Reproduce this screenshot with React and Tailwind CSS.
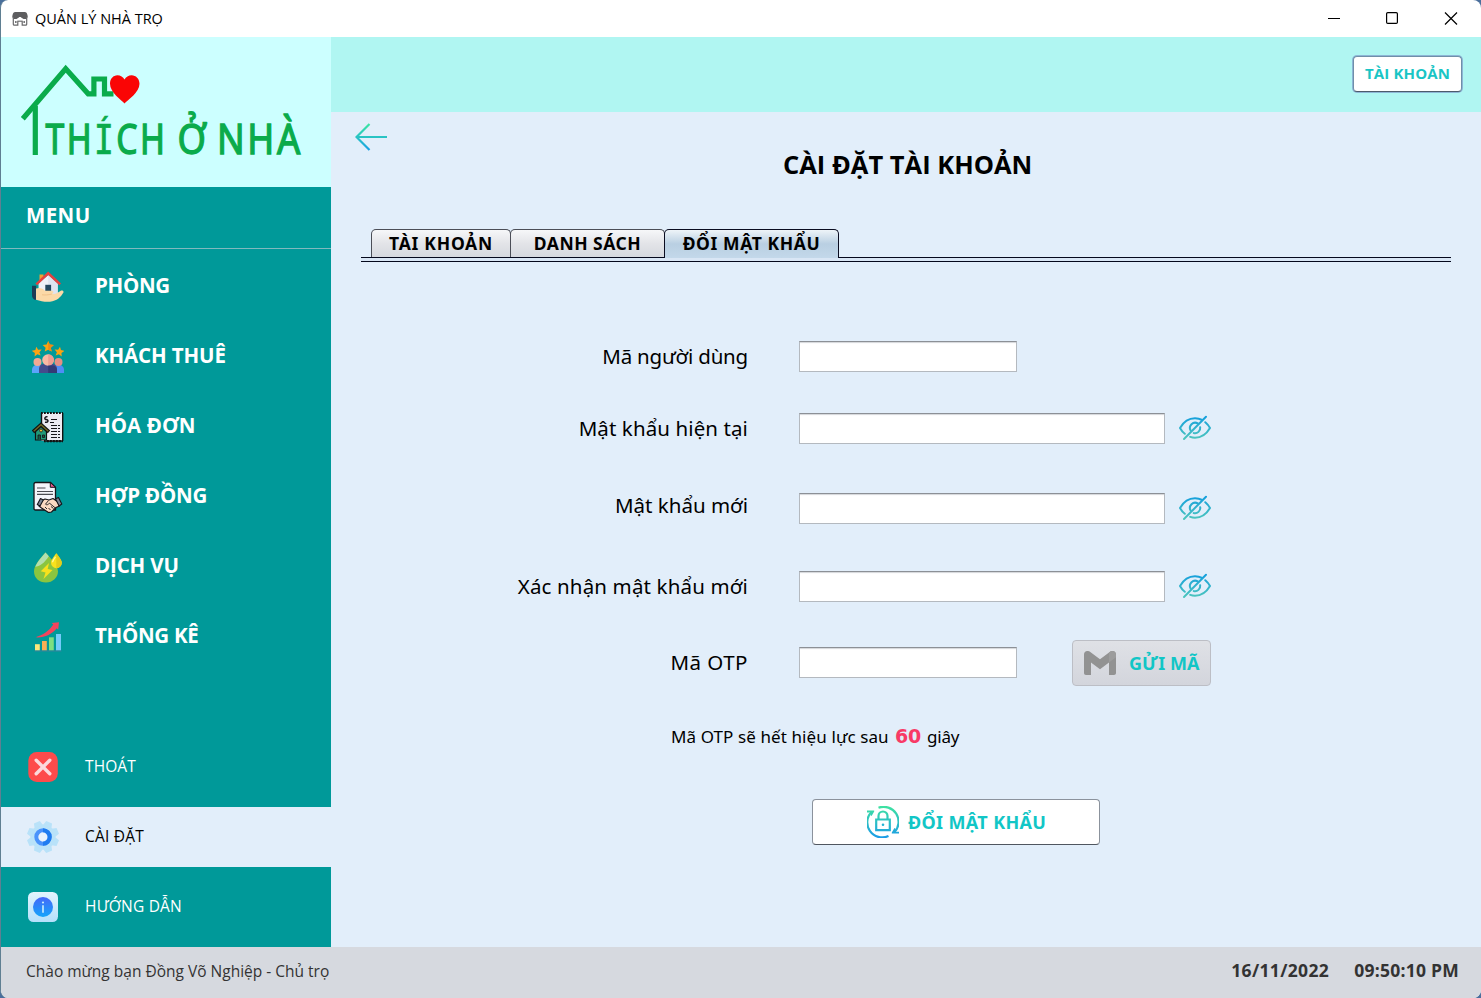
const SANS = "font-['Open_Sans','Noto_Sans',sans-serif]";
const TAHOMA = "font-['Noto_Sans','DejaVu_Sans',sans-serif]";

function AppIcon() {
  return (
    <svg width="16" height="16" viewBox="0 0 16 16">
      <path d="M3 .9h10c1.800 0 2.800 3 2.800 5.700H.2C.2 3.900 1.200.9 3 .9z" fill="#5e5e60" />
      <path d="M1.300 6v7.200c0 .7.500 1 1 1h3.500v-4h4.400v4h3.500c.6 0 1-.4 1-1V6" fill="#fff" stroke="#68686a" strokeWidth="1.200" />
      <path d="M1.500 6h13v2h-3L8 5.800 4.500 8h-3z" fill="#5e5e60" />
      <path d="M4.800 9.200L8 6.500l3.200 2.700" fill="#fff" stroke="#fff" strokeWidth="1" />
      <path d="M3 10h1.600v2H3zM11.400 10H13v2h-1.600z" fill="#77777a" />
    </svg>
  );
}

function Logo() {
  return (
    <svg width="330" height="150" viewBox="1 37 330 150">
      <g fill="none" stroke="#0aab4b" strokeWidth="5.200">
        <path d="M22.800 118.800L65.700 68.700l22.500 25.100h5.700V79h10.600v14.800h9" />
        <path d="M35.300 106v49" />
      </g>
      <path d="M124.500 103.500c-3-3.500-14.500-11-14.500-19.800 0-5 3.300-8.500 7.400-8.500 3.100 0 5.700 1.800 7.100 4.300 1.400-2.500 4-4.300 7.200-4.300 4.100 0 7.800 3.500 7.800 8.500 0 8.800-12 16.300-15 19.800z" fill="#fa0505" />
      <g fill="#0aab4b" stroke="#0aab4b" strokeWidth="1.300" fontSize="41" style={{ fontFamily: "'Noto Sans', sans-serif" }}>
        <text x="45.500" y="154" textLength="122" lengthAdjust="spacingAndGlyphs" letterSpacing="3">
          TH<tspan fontSize="40" strokeWidth=".7" style={{ fontFamily: "'DejaVu Sans Mono', monospace" }}>Í</tspan>CH
        </text>
        <text x="177.500" y="154" textLength="28.500" lengthAdjust="spacingAndGlyphs">Ở</text>
        <text x="217" y="154" textLength="86" lengthAdjust="spacingAndGlyphs" letterSpacing="3">NHÀ</text>
      </g>
    </svg>
  );
}

function RoomIcon() {
  return (
    <svg width="32" height="32" viewBox="0 0 32 32">
      <path d="M7.500 3.500h4V8l-4 3.500z" fill="#f0a030" />
      <path d="M6.500 12.500L16.200 4l9.500 8.500v12h-19z" fill="#eef1f8" />
      <path d="M16.200 4l9.500 8.500v12h-9.500z" fill="#dfe4f0" />
      <path d="M4.300 13.300L16.200 2.300l12 11" fill="none" stroke="#e5413f" strokeWidth="2.500" />
      <rect x="13.300" y="13.800" width="5.800" height="8" fill="#23475f" />
      <path d="M0 14.800h4.200v14H2.500C.8 27.500 0 26 0 24z" fill="#1d3c55" />
      <path d="M4 17.500c4-1.300 6.500-.3 9 2.200h6.500c2.300 0 2.600 2.800.4 3.200 4 .3 6.300-1.400 8.500-3 1.900-1.200 3.800.3 3 1.700C28.500 26.500 25 30 18 30.700c-5 .5-9.500-.7-14-2z" fill="#fbd9a7" />
      <path d="M10 23.800c3 .3 6 .3 9.900-.8" fill="none" stroke="#edbd83" strokeWidth=".8" />
    </svg>
  );
}

function Person({ x, y, r, head, body, w, h }) {
  return (
    <g>
      <path d={`M${x - w} 32v-${h - 4}c0-3 2-5 5-5h${2 * w - 10}c3 0 5 2 5 5v${h - 4}z`} fill={body} />
      <circle cx={x} cy={y} r={r} fill={head} />
    </g>
  );
}

function CustomersIcon() {
  const star = "M0-5.600l1.600 3.600 4 .4-3 2.700.9 3.900L0 3.100-3.500 5l.9-3.900-3-2.700 4-.4z";
  return (
    <svg width="32" height="32" viewBox="0 0 32 32">
      <g fill="#fca311">
        <path d={star} transform="translate(16.200 5.600)" />
        <path d={star} transform="translate(5 10.600) scale(.88) rotate(-8)" />
        <path d={star} transform="translate(27.300 10.600) scale(.88) rotate(8)" />
      </g>
      <path d="M16.200 0l1.600 3.600 4 .4-3 2.700.9 3.900-3.500-1.900z" fill="#ef8a14" />
      <Person x={5.500} y={21} r={4} head="#f0a994" body="#5ba4fb" w={5.500} h={7} />
      <Person x={26.500} y={21} r={4} head="#e58e84" body="#4e8df5" w={5.500} h={7} />
      <Person x={16} y={19} r={5.800} head="#fbb8a3" body="#454b8c" w={9} h={8} />
      <path d="M16.200 13.200a5.800 5.800 0 010 11.600z" fill="#ef9d92" />
      <path d="M16.200 24.500h4c3 0 4.800 2 4.800 4.500v3h-8.800z" fill="#343a75" />
    </svg>
  );
}

function InvoiceIcon() {
  return (
    <svg width="32" height="32" viewBox="0 0 32 32">
      <rect x="9.500" y="2" width="21" height="28" fill="#ececf3" />
      <path d="M9.500 2v12M30.700 2v28M14 30h16" stroke="#111" strokeWidth="1.400" fill="none" />
      <path d="M9 2h22M12 30.200h19" stroke="#111" strokeWidth="2.200" strokeDasharray="1.800 1.200" />
      <path d="M19 8.500h7M18 11.500h4M19 14.500h9M19 17.500h9M19 20.500h9M19 23.500h9M19 26.500h9" stroke="#15151a" strokeWidth="1.200" strokeDasharray="6 1 2 0" />
      <path d="M15.500 5.800c-3-.6-3.500 2.600-1.200 2.800 2.700.2 2 3.200-1.300 2.600" stroke="#15151a" strokeWidth="1.500" fill="none" />
      <path d="M3.500 20.500V29h11v-8.500L9 15.300z" fill="#219a78" stroke="#111" strokeWidth="1.200" />
      <path d="M1 20.800l8-7.100 8 7.100" fill="none" stroke="#111" strokeWidth="3.600" />
      <path d="M1.700 20.200L9 13.700l7.300 6.500" fill="none" stroke="#6f6a25" strokeWidth="1.400" />
      <circle cx="9" cy="19.500" r="1.500" fill="#e9c13c" stroke="#111" strokeWidth=".7" />
      <path d="M6 28.500v-4.500h2.500v4.500M10.500 24h2v2.500h-2z" fill="#195a4b" stroke="#111" strokeWidth=".8" />
    </svg>
  );
}

function ContractIcon() {
  return (
    <svg width="32" height="32" viewBox="0 0 32 32">
      <path d="M3.500 1.500h15l5 4.800V29h-20c-1 0-1.500-.5-1.500-1.500V3c0-1 .5-1.500 1.500-1.500z" fill="#f3f4fa" stroke="#15151a" strokeWidth="1.300" />
      <path d="M18.300 1.500v4.800h5.200z" fill="#e8568c" stroke="#15151a" strokeWidth="1" />
      <path d="M5 7h8.500M5 10.500h16M5 13.300h16" stroke="#4a4b52" strokeWidth="1.200" />
      <path d="M9 20l4-2 4 1 4-1.500 5 3.500 1.500 4-3.500 1.500-4.500 4.500-3 .5-7-4.500-2.500-2z" fill="#fbd9c2" stroke="#15151a" strokeWidth="1.200" strokeLinejoin="round" />
      <path d="M16.500 19.500l-3 3.700c1.500 1.200 3 .2 4-1l5.500 4.500M19 25.500l2.500 2M16.500 27l2 2M13 26l2 2" fill="none" stroke="#15151a" strokeWidth=".9" />
      <path d="M8.500 17.500l2.800 1.400-3.300 6-2.700-1.400zM23.500 17.800l3-1.300 3.300 6.500-2.700 2z" fill="#7d8696" stroke="#15151a" strokeWidth="1.100" strokeLinejoin="round" />
    </svg>
  );
}

function ServiceIcon() {
  return (
    <svg width="32" height="32" viewBox="0 0 32 32">
      <path d="M13.500 1.500C9 6.500 2 14 2 20.500 2 27 7.200 31.500 14 31.500S26 26.500 26 20.500C26 14 18 6.500 13.500 1.500z" fill="#8bc53f" />
      <path d="M13.500 1.500C10.500 5 5.500 10.500 3.300 15.800c4-.3 9-3.500 13.500-10.600-1.200-1.400-2.300-2.600-3.300-3.700z" fill="#b3dfae" />
      <path d="M17 12L8.800 20.200l4.700 1.200-2 6.600 9-8.900-4.800-1.100z" fill="#f8e11d" />
      <path d="M24.300 2.300c-2 2.800-5.300 6.500-5.300 9.500a5.400 5.400 0 0010.800 0c0-3-3.500-6.700-5.500-9.500z" fill="#f8e11d" />
      <path d="M24.300 2.300v15a5.500 5.500 0 005.500-5.500c0-3-3.500-6.700-5.500-9.500z" fill="#e3cc1a" />
      <path d="M23.500 5.800c-1.400 1.800-2.800 3.600-3 5.500" fill="none" stroke="#fff9a8" strokeWidth="1.200" />
    </svg>
  );
}

function StatsIcon() {
  return (
    <svg width="32" height="32" viewBox="0 0 32 32">
      <path d="M3 23.200h4.800v6.300H3z" fill="#fae77c" />
      <path d="M10 20h4.800v9.500H10z" fill="#f9af55" />
      <path d="M17 16.300h4.800v13.200H17z" fill="#7ddf80" />
      <path d="M24 13h5v16.500h-5z" fill="#74cbf9" />
      <path d="M2.500 30h27" stroke="#3c7f9c" strokeWidth=".9" />
      <path d="M3.500 16.300C12 17 20 13.500 24.800 7.300l1.400 1.500.8-7.500-7.300.6 1.600 1.700C17 10 11 14.300 3.500 16.300z" fill="#f4435c" />
    </svg>
  );
}

function ExitIcon() {
  return (
    <svg width="32" height="32" viewBox="0 0 32 32">
      <rect x="1.300" y="1" width="29.500" height="30" rx="8.500" fill="#fd4b4b" />
      <path d="M9.200 9.200l13.600 13.600M22.800 9.200L9.200 22.800" stroke="#fbd9dc" strokeWidth="3.400" strokeLinecap="round" />
    </svg>
  );
}

function GearIcon() {
  return (
    <svg width="32" height="32" viewBox="0 0 32 32">
      <g fill="#b9e2f9">
        <circle cx="16" cy="16" r="12.500" />
        {[22.500, 67.500, 112.500, 157.500].map((a) => (
          <path key={a} d="M12.800 0h6.400l1.300 5h-9zM12.800 32h6.400l1.300-5h-9z" transform={`rotate(${a} 16 16)`} />
        ))}
      </g>
      <circle cx="16" cy="16" r="6.700" fill="#e9f3fd" stroke="#4a93fb" strokeWidth="4" />
      <path d="M16 9.300a6.700 6.700 0 010 13.400" fill="none" stroke="#1f7cf0" strokeWidth="4" />
    </svg>
  );
}

function InfoIcon() {
  return (
    <svg width="32" height="32" viewBox="0 0 32 32">
      <defs>
        <linearGradient id="infoBox" x2="0" y2="1"><stop stopColor="#e2f4fd" /><stop offset="1" stopColor="#b4e0fb" /></linearGradient>
        <linearGradient id="infoDot" x2="0" y2="1"><stop stopColor="#4768f8" /><stop offset="1" stopColor="#12a5fb" /></linearGradient>
      </defs>
      <rect x="1" y="1" width="30" height="30" rx="5.500" fill="url(#infoBox)" />
      <circle cx="16" cy="16" r="10" fill="url(#infoDot)" />
      <path d="M16 14.300v7.400" stroke="#c3e9fc" strokeWidth="1.700" />
      <circle cx="16" cy="11.500" r="1.100" fill="#c3e9fc" />
    </svg>
  );
}

function EyeOffIcon() {
  return (
    <svg width="32" height="26" viewBox="0 0 32 26" className="shrink-0">
      <defs>
        <linearGradient id="eye" gradientUnits="userSpaceOnUse" x1="0" y1="2" x2="0" y2="24"><stop stopColor="#16a0dc" /><stop offset="1" stopColor="#4cc5bd" /></linearGradient>
      </defs>
      <g fill="none" stroke="url(#eye)" strokeWidth="2" strokeLinecap="round">
        <path d="M5.800 18.800C3.800 17.300 2.200 15.200 1 13 4.500 7 9.500 3.300 16 3.300c2.600 0 5 .6 7.200 1.700" />
        <path d="M26.300 7.200c1.900 1.600 3.500 3.600 4.700 5.800-3.500 6-8.500 9.700-15 9.700-1.700 0-3.300-.3-4.800-.8" />
        <path d="M11.600 15.600a5.300 5.300 0 017.200-7.200M21.200 12.200a5.300 5.300 0 01-6.500 5.900" />
        <path d="M27 1.800L5 24" />
      </g>
    </svg>
  );
}

function LockRefreshIcon() {
  return (
    <svg width="32" height="32" viewBox="0 0 32 32">
      <defs>
        <linearGradient id="lock" gradientUnits="userSpaceOnUse" x1="0" y1="0" x2="0" y2="32"><stop stopColor="#3fe3a0" /><stop offset="1" stopColor="#1a9be8" /></linearGradient>
      </defs>
      <g fill="none" stroke="url(#lock)" strokeWidth="2.200">
        <path d="M11.500 1.700A15 15 0 0127.300 26.300" />
        <path d="M21.500 30A15 15 0 014.700 5.700" />
        <path d="M9.200 13.500h13.600v10.600H9.200z" />
        <path d="M11.500 13.500V10a4.500 4.500 0 019 0v3.500" />
      </g>
      <path d="M0 4.500h7.200v1L4.600 10 3.200 9l1.200-2.600H0zM32 27.600h-7.200v-1l2.600-4.500 1.400 1-1.200 2.600H32z" fill="url(#lock)" />
      <circle cx="16" cy="18.800" r="1.300" fill="#22b4d4" />
    </svg>
  );
}

function MailIcon() {
  return (
    <svg width="32" height="24" viewBox="0 0 32 24">
      <path d="M0 3.500C0 0 4-1 6.300 1L16 8.300 25.700 1C28-1 32 0 32 3.500V22c0 1.200-.8 2-2 2h-5V11.500L16 18.300 7 11.500V24H2c-1.200 0-2-.8-2-2z" fill="#929292" />
      <path d="M25 1.500C28-1 32 0 32 3.500v2.700l-7 5.300z" fill="#9c9c9c" />
    </svg>
  );
}

const MENU = [
  [RoomIcon, "PHÒNG", "tracking-[-0.300px]"],
  [CustomersIcon, "KHÁCH THUÊ", "tracking-[-0.120px]"],
  [InvoiceIcon, "HÓA ĐƠN", "tracking-[0.050px]"],
  [ContractIcon, "HỢP ĐỒNG", "tracking-[-0.200px]"],
  [ServiceIcon, "DỊCH VỤ", "tracking-[-0.150px]"],
  [StatsIcon, "THỐNG KÊ", "tracking-[-0.300px]"],
];

function Field({ label, width, nudge = "", tracking, className, children }) {
  return (
    <div className={`flex h-[46px] items-center ${className}`}>
      <label className={`${TAHOMA} w-[417px] whitespace-nowrap text-right text-[20.500px] leading-[30px] text-black ${tracking} ${nudge}`}>{label}</label>
      <input className={`ml-[51px] h-[31px] border border-[#b4b9bf] border-t-[#8c9096] bg-white px-2 shadow-[inset_0_2px_1px_-1px_#d4d6da] outline-none ${width}`} />
      {children}
    </div>
  );
}

export default function App() {
  return (
    <div className="h-[998px] w-[1481px] overflow-hidden bg-[#4a6f9c]">
      <div className={`${SANS} flex h-full flex-col overflow-hidden rounded-[8px] border-l border-[#5f7f92] bg-white`}>
        <header className="flex h-[37px] shrink-0 items-center">
          <div className="ml-[11px] flex"><AppIcon /></div>
          <span className="ml-[7px] text-[14.500px] leading-[20px] text-black">QUẢN LÝ NHÀ TRỌ</span>
          <svg className="mb-[2px] ml-auto mr-[23px]" width="131" height="14" viewBox="0 0 131 14" fill="none" stroke="#000" strokeWidth="1.200">
            <path d="M1 7.500h12" strokeWidth="1" />
            <rect x="59.600" y="1.600" width="10.800" height="10.800" rx="1.200" />
            <path d="M118 1.500l12 12M130 1.500l-12 12" />
          </svg>
        </header>

        <div className="flex h-[910px] shrink-0">
          <aside className="flex w-[330px] shrink-0 flex-col bg-[#009999]">
            <div className="h-[150px] bg-[#ccffff]"><Logo /></div>
            <div className="flex h-[62px] items-center border-b border-[#80b9be] pb-[5px] pl-[25px] text-[20.500px] font-bold tracking-[0.400px] text-white">MENU</div>
            <nav className="pt-[1px]">
              {MENU.map(([Icon, text, tracking]) => (
                <div key={text} className="flex h-[70px] items-center pl-[31px]">
                  <div className="mt-[4px]"><Icon /></div>
                  <span className={`mb-[1px] ml-[31px] text-[20.500px] font-bold leading-[30px] text-white ${tracking}`}>{text}</span>
                </div>
              ))}
            </nav>
            <div className="mt-auto">
              <div className="flex h-[80px] items-center pl-[26px] text-[15.500px] leading-[24px] tracking-[0.100px] text-white">
                <ExitIcon /><span className="mb-[2px] ml-[26px]">THOÁT</span>
              </div>
              <div className="flex h-[60px] items-center bg-[#e2eefa] pl-[26px] text-[15.500px] leading-[24px] tracking-[0.200px] text-black">
                <GearIcon /><span className="mb-[2px] ml-[26px]">CÀI ĐẶT</span>
              </div>
              <div className="flex h-[80px] items-center pl-[26px] text-[15.500px] leading-[24px] tracking-[0.200px] text-white">
                <InfoIcon /><span className="mb-[2px] ml-[26px]">HƯỚNG DẪN</span>
              </div>
            </div>
          </aside>

          <main className="flex flex-1 flex-col bg-[#e2eefa]">
            <div className="flex h-[75px] shrink-0 items-start justify-end bg-[#b0f6f2] pr-[19px] pt-[19px]">
              <button className="h-[36px] w-[109px] whitespace-nowrap rounded-[4px] border border-[#6f8fa8] border-b-[#4c5a6b] bg-white pb-[2px] text-[15px] font-bold tracking-[0.150px] text-[#19c5c5] shadow-[0_0_0_1px_#8db6d6]">TÀI KHOẢN</button>
            </div>

            <svg className="ml-[24px] mt-[11px] shrink-0" width="32" height="28" viewBox="0 0 32 28" fill="none">
              <defs>
                <linearGradient id="back" gradientUnits="userSpaceOnUse" x1="0" y1="0" x2="0" y2="28"><stop stopColor="#3be8a0" /><stop offset="1" stopColor="#169ee8" /></linearGradient>
              </defs>
              <path d="M14.500 1L1.500 14l13 13M1.500 14L32 14.010" stroke="url(#back)" strokeWidth="2.200" />
            </svg>
            <h1 className="-mt-[7px] mb-[1px] ml-[452px] h-[40px] whitespace-nowrap text-[25.500px] font-bold leading-[40px] text-black">CÀI ĐẶT TÀI KHOẢN</h1>

            <div className={`${TAHOMA} ml-[30px] mt-[44px] w-[1090px] text-[17.500px] font-bold leading-[26px] text-black`}>
              <div className="flex h-[28px] pl-[10px]">
                <div className="h-[28px] w-[140px] rounded-t-[5px] border border-b-0 border-[#4b4e57] bg-linear-to-b from-[#f6f7f9] via-[#e3e4e8] to-[#d6d9df] text-center tracking-[0.750px]">TÀI KHOẢN</div>
                <div className="-ml-px h-[28px] w-[155px] rounded-t-[5px] border border-b-0 border-[#4b4e57] bg-linear-to-b from-[#f6f7f9] via-[#e3e4e8] to-[#d6d9df] text-center tracking-[0.500px]">DANH SÁCH</div>
                <div className="relative z-10 -ml-px h-[29px] w-[175px] rounded-t-[5px] border border-b-0 border-[#0a0c20] bg-linear-to-b from-[#eef4f8] via-[#b9cfe2] to-[#c3d8ea] text-center tracking-[0.600px]">ĐỔI MẬT KHẨU</div>
              </div>
              <div className="h-[5px] border-y border-[#04081c] bg-[#d9e6f5]" />
            </div>

            <div className="flex flex-col">
              <Field label="Mã người dùng" width="w-[218px]" tracking="tracking-[-0.200px]" className="mt-[71px]" />
              <Field label="Mật khẩu hiện tại" width="w-[366px]" tracking="tracking-[0.100px]" className="mt-[26px]">
                <span className="ml-[14px]"><EyeOffIcon /></span>
              </Field>
              <Field label="Mật khẩu mới" width="w-[366px]" tracking="tracking-[0px]" nudge="mb-[6px]" className="mt-[34px]">
                <span className="ml-[14px]"><EyeOffIcon /></span>
              </Field>
              <Field label="Xác nhận mật khẩu mới" width="w-[366px]" tracking="tracking-[0.150px]" className="mt-[32px]">
                <span className="ml-[14px]"><EyeOffIcon /></span>
              </Field>
              <Field label="Mã OTP" width="w-[218px]" tracking="tracking-[0.500px]" className="mt-[30px]">
                <button className={`${TAHOMA} ml-[55px] mt-px flex h-[46px] w-[139px] items-center rounded-[4px] border border-[#bcbec5] bg-linear-to-b from-[#dfe1e6] to-[#d3d5dc] pl-[11px] text-[18px] font-bold text-[#12c6c6]`}>
                  <MailIcon /><span className="ml-[13px] mt-[1px] whitespace-nowrap">GỬI MÃ</span>
                </button>
              </Field>

              <p className={`${TAHOMA} ml-[340px] mt-[36px] flex h-[30px] items-baseline whitespace-nowrap text-[17px] leading-[30px] text-black`}>
                <span className="w-[224px] tracking-[0.100px]">Mã OTP sẽ hết hiệu lực sau</span>
                <span className="w-[32px] font-['DejaVu_Sans',sans-serif] text-[19px] font-bold tracking-[-0.200px] text-[#f83a66]">60</span>
                <span className="tracking-[-0.200px]">giây</span>
              </p>

              <button className={`${TAHOMA} ml-[481px] mt-[48px] flex h-[46px] w-[288px] items-center rounded-[4px] border border-[#8b929c] border-b-[#50565f] bg-white pl-[54px] text-[18px] font-bold tracking-[0.350px] text-[#12c6c6]`}>
                <LockRefreshIcon /><span className="ml-[9px] whitespace-nowrap">ĐỔI MẬT KHẨU</span>
              </button>
            </div>
          </main>
        </div>

        <footer className="flex flex-1 items-center bg-[#d6d9df] pb-[4px] pl-[25px] pr-[22px] text-[#333]">
          <span className="mt-[2px] text-[15.500px]">Chào mừng bạn Đồng Võ Nghiệp - Chủ trọ</span>
          <span className="ml-auto text-[17.500px] font-bold tracking-[0.350px]">16/11/2022</span>
          <span className="ml-[25px] text-[17.500px] font-bold tracking-[0.250px]">09:50:10 PM</span>
        </footer>
      </div>
    </div>
  );
}
